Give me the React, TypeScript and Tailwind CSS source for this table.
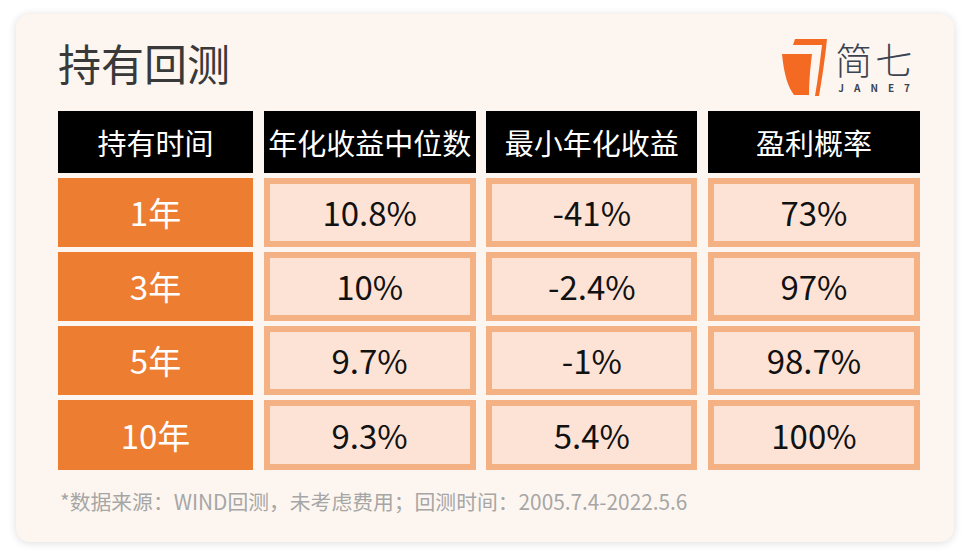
import React from "react";

const rows = [
  { label: "1年", a: "10.8%", b: "-41%", c: "73%" },
  { label: "3年", a: "10%", b: "-2.4%", c: "97%" },
  { label: "5年", a: "9.7%", b: "-1%", c: "98.7%" },
  { label: "10年", a: "9.3%", b: "5.4%", c: "100%" },
];

const heads = ["持有时间", "年化收益中位数", "最小年化收益", "盈利概率"];

function Logo() {
  return (
    <div className="flex items-start">
      <svg width="56" height="62" viewBox="0 0 56 62">
        <path d="M18 4 L50 4 C48 24 45 44 42 61 L38 61 C41 44 43 26 45 10 L16 10 Z" fill="#f46a22" />
        <path d="M5 19 L35 19 C33 35 32 48 32 60 L17 60 C11 52 7 40 5 19 Z" fill="#f46a22" />
      </svg>
      <div className="flex flex-col ml-[2px]">
        <div className="text-[37px] leading-[37px] font-light text-[#3b4350] tracking-[3px] mt-[6px]">简七</div>
        <div className="text-[10px] leading-[10px] font-bold text-[#3b4350] tracking-[10px] mt-[5px] ml-[3px]">JANE7</div>
      </div>
    </div>
  );
}

export default function App() {
  return (
    <div className="w-[970px] h-[556px] bg-white pt-[14px] pl-[16px] font-['Noto_Sans_CJK_SC',sans-serif]">
      <div className="w-[938px] h-[528px] rounded-[14px] bg-[#fdf6f0] shadow-[0_1px_8px_rgba(0,0,0,0.14)] pl-[42px] pr-[34px]">
        <div className="flex justify-between h-[97px]">
          <div className="text-[43px] leading-none text-[#393939] mt-[27px]">持有回测</div>
          <div className="mt-[21px]">
            <Logo />
          </div>
        </div>
        <div className="grid grid-cols-[195px_212px_211px_212px] grid-rows-[62px_69px_69px_69px_70px] gap-x-[10.67px] gap-y-[5px]">
          {heads.map((h) => (
            <div key={h} className="bg-black text-white text-[29px] leading-none flex items-center justify-center">
              {h}
            </div>
          ))}
          {rows.map((r) => (
            <React.Fragment key={r.label}>
              <div className="bg-[#ed7d31] text-white text-[33px] leading-none flex items-center justify-center">
                {r.label}
              </div>
              {[r.a, r.b, r.c].map((v, i) => (
                <div
                  key={i}
                  className="bg-[#fce3d6] border-[6px] border-[#f4b183] text-[#111111] text-[33px] leading-none flex items-center justify-center"
                >
                  {v}
                </div>
              ))}
            </React.Fragment>
          ))}
        </div>
        <div className="mt-[21px] text-[20.8px] leading-none text-[#a6a6a6] ml-[2px]">
          *数据来源：WIND回测，未考虑费用；回测时间：2005.7.4-2022.5.6
        </div>
      </div>
    </div>
  );
}
